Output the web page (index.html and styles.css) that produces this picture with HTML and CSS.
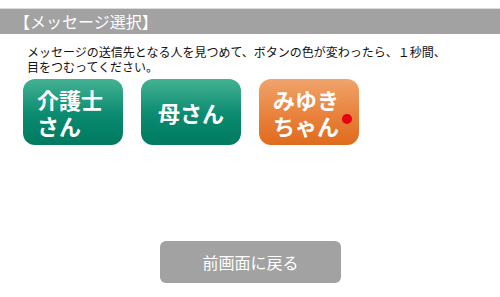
FILE: index.html
```html
<!DOCTYPE html>
<html lang="ja">
<head>
<meta charset="utf-8">
<link rel="stylesheet" href="styles.css">
</head>
<body>
<div class="page">
  <div class="header">【メッセージ選択】</div>
  <p class="desc">メッセージの送信先となる人を見つめて、ボタンの色が変わったら、１秒間、<br>目をつむってください。</p>
  <div class="targets">
    <div class="target green"><span>介護士さん</span></div>
    <div class="target green"><span>母さん</span></div>
    <div class="target orange"><span>みゆきちゃん</span><i class="dot"></i></div>
  </div>
  <div class="footer">
    <div class="back">前画面に戻る</div>
  </div>
</div>
</body>
</html>
```
FILE: styles.css
```css
html, body {
  margin: 0;
  padding: 0;
  background: #ffffff;
}
.page {
  width: 500px;
  height: 297px;
  padding-top: 8px;
  box-sizing: border-box;
  font-family: "Noto Sans CJK JP", "Noto Sans", sans-serif;
  display: flex;
  flex-direction: column;
}
.header {
  height: 25px;
  line-height: 25px;
  background: #a2a2a2;
  border-top: 1px solid #dcdcdc;
  color: #ffffff;
  font-size: 16px;
  padding-left: 14px;
}
.desc {
  margin: 10px 0 0 0;
  padding-left: 27px;
  font-size: 12px;
  line-height: 15px;
  color: #111111;
}
.targets {
  display: flex;
  gap: 18px;
  padding-left: 23px;
  margin-top: 5px;
}
.target {
  position: relative;
  width: 100px;
  height: 66px;
  box-sizing: border-box;
  padding: 0 14px;
  border-radius: 12px;
  display: flex;
  align-items: center;
  justify-content: center;
  color: #ffffff;
  font-size: 22px;
  font-weight: bold;
  line-height: 26px;
}
.green {
  background: linear-gradient(to bottom, #43b292 0%, #0a8a70 55%, #007a60 100%);
}
.orange {
  background: linear-gradient(to bottom, #f0a46c 0%, #e8823c 55%, #e06a1c 100%);
}
.dot {
  position: absolute;
  left: 83px;
  top: 35px;
  width: 10px;
  height: 10px;
  border-radius: 50%;
  background: #e60012;
}
.footer {
  margin-top: auto;
  margin-bottom: 14px;
  display: flex;
  justify-content: center;
}
.back {
  width: 181px;
  height: 42px;
  margin-left: 1px;
  border-radius: 6px;
  background: #a2a2a2;
  color: #ffffff;
  font-size: 16px;
  line-height: 42px;
  text-align: center;
}
```
